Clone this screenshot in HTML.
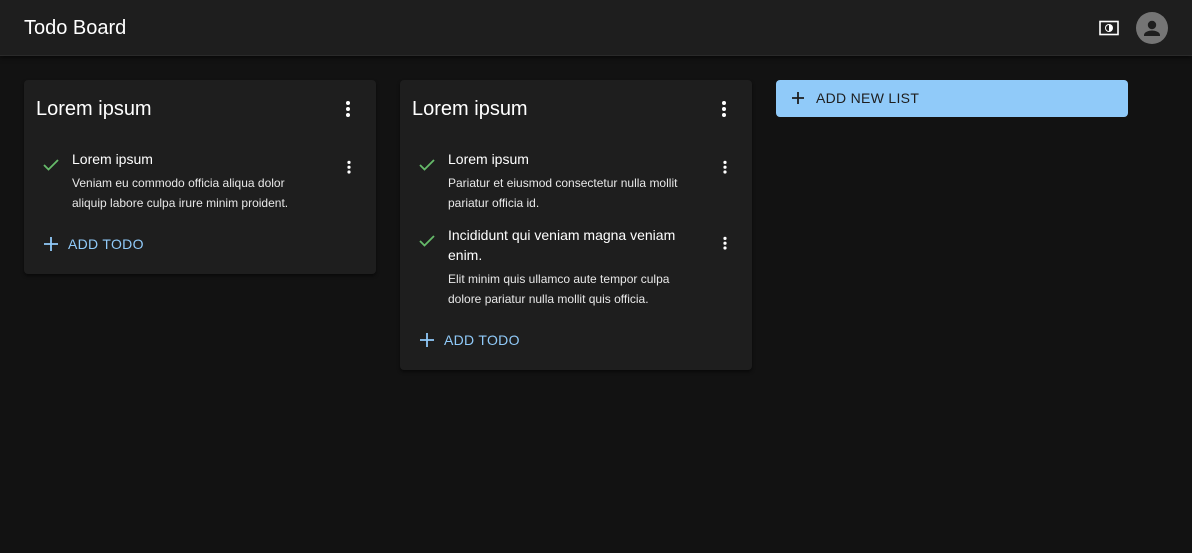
<!DOCTYPE html>
<html><head><meta charset="utf-8"><style>
*{box-sizing:border-box;margin:0;padding:0}
body{width:1192px;height:553px;background:#121212;font-family:"Liberation Sans",sans-serif;color:#fff;overflow:hidden;position:relative}
.bar{position:absolute;left:0;top:0;width:1192px;height:56px;background:#1e1e1e;border-bottom:1px solid #2a2a2a;box-shadow:0 2px 4px rgba(0,0,0,.5)}
.bar .t{position:absolute;left:24px;top:17px;font-size:20px}
.card{position:absolute;top:80px;width:352px;background:#1e1e1e;border-radius:4px;box-shadow:0 2px 3px rgba(0,0,0,.5)}
.ct{position:absolute;left:12px;top:18px;font-size:20px}
.dots{position:absolute;width:4px}
.dots i{display:block;width:4px;height:4px;border-radius:2px;background:#fff;margin-bottom:2px}
.item{position:absolute;left:48px;width:242px}
.item .h{font-size:14px;line-height:20px}
.item .d{font-size:12px;line-height:20px;color:#e8e8e8;margin-top:4px}
.chk{position:absolute;left:19px}
.add{position:absolute;left:20px;font-size:14px;color:#90caf9;letter-spacing:.3px}
.add span{position:absolute;left:24px;top:0;white-space:nowrap}
</style></head><body>
<div class="bar"><div class="t">Todo Board</div>
<svg style="position:absolute;left:1099px;top:20px" width="20" height="16" viewBox="0 0 20 16"><rect x="1" y="1.5" width="18" height="13" fill="none" stroke="#fff" stroke-width="1.6"/><circle cx="10" cy="8" r="4" fill="#fff"/><path d="M10 5a3 3 0 0 0 0 6z" fill="#1e1e1e"/></svg>
<svg style="position:absolute;left:1136px;top:12px" width="32" height="32" viewBox="0 0 32 32"><circle cx="16" cy="16" r="16" fill="#757575"/><circle cx="16" cy="13" r="4.2" fill="#1e1e1e"/><path d="M8 23c0-3 5-4.5 8-4.5s8 1.5 8 4.5v1H8z" fill="#1e1e1e"/></svg>
</div>

<div class="card" style="left:24px;height:194px">
<div class="ct">Lorem ipsum</div>
<div class="dots" style="left:322px;top:21px"><i></i><i></i><i></i></div>
<svg class="chk" style="top:79px" width="16" height="12" viewBox="0 0 16 12"><path d="M1 6l4.5 4.5L15 1" fill="none" stroke="#66bb6a" stroke-width="1.8"/></svg>
<div class="item" style="top:69px"><div class="h">Lorem ipsum</div><div class="d">Veniam eu commodo officia aliqua dolor aliquip labore culpa irure minim proident.</div></div>
<div class="dots" style="left:323px;top:79px;transform:scale(.8)"><i></i><i></i><i></i></div>
<div class="add" style="top:156px"><svg width="14" height="14" style="position:absolute;top:1px" viewBox="0 0 14 14"><path d="M7 0v14M0 7h14" stroke="#90caf9" stroke-width="1.8"/></svg><span>ADD TODO</span></div>
</div>

<div class="card" style="left:400px;height:290px">
<div class="ct">Lorem ipsum</div>
<div class="dots" style="left:322px;top:21px"><i></i><i></i><i></i></div>
<svg class="chk" style="top:79px" width="16" height="12" viewBox="0 0 16 12"><path d="M1 6l4.5 4.5L15 1" fill="none" stroke="#66bb6a" stroke-width="1.8"/></svg>
<div class="item" style="top:69px"><div class="h">Lorem ipsum</div><div class="d">Pariatur et eiusmod consectetur nulla mollit pariatur officia id.</div></div>
<div class="dots" style="left:323px;top:79px;transform:scale(.8)"><i></i><i></i><i></i></div>
<svg class="chk" style="top:155px" width="16" height="12" viewBox="0 0 16 12"><path d="M1 6l4.5 4.5L15 1" fill="none" stroke="#66bb6a" stroke-width="1.8"/></svg>
<div class="item" style="top:145px"><div class="h">Incididunt qui veniam magna veniam enim.</div><div class="d">Elit minim quis ullamco aute tempor culpa dolore pariatur nulla mollit quis officia.</div></div>
<div class="dots" style="left:323px;top:155px;transform:scale(.8)"><i></i><i></i><i></i></div>
<div class="add" style="top:252px"><svg width="14" height="14" style="position:absolute;top:1px" viewBox="0 0 14 14"><path d="M7 0v14M0 7h14" stroke="#90caf9" stroke-width="1.8"/></svg><span>ADD TODO</span></div>
</div>

<div style="position:absolute;left:776px;top:80px;width:352px;height:37px;background:#90caf9;border-radius:4px;color:#1e1e1e;font-size:14px;letter-spacing:.3px">
<svg width="12" height="12" style="position:absolute;left:16px;top:12px" viewBox="0 0 12 12"><path d="M6 0v12M0 6h12" stroke="#1e1e1e" stroke-width="1.8"/></svg>
<span style="position:absolute;left:40px;top:10px">ADD NEW LIST</span></div>
</body></html>
